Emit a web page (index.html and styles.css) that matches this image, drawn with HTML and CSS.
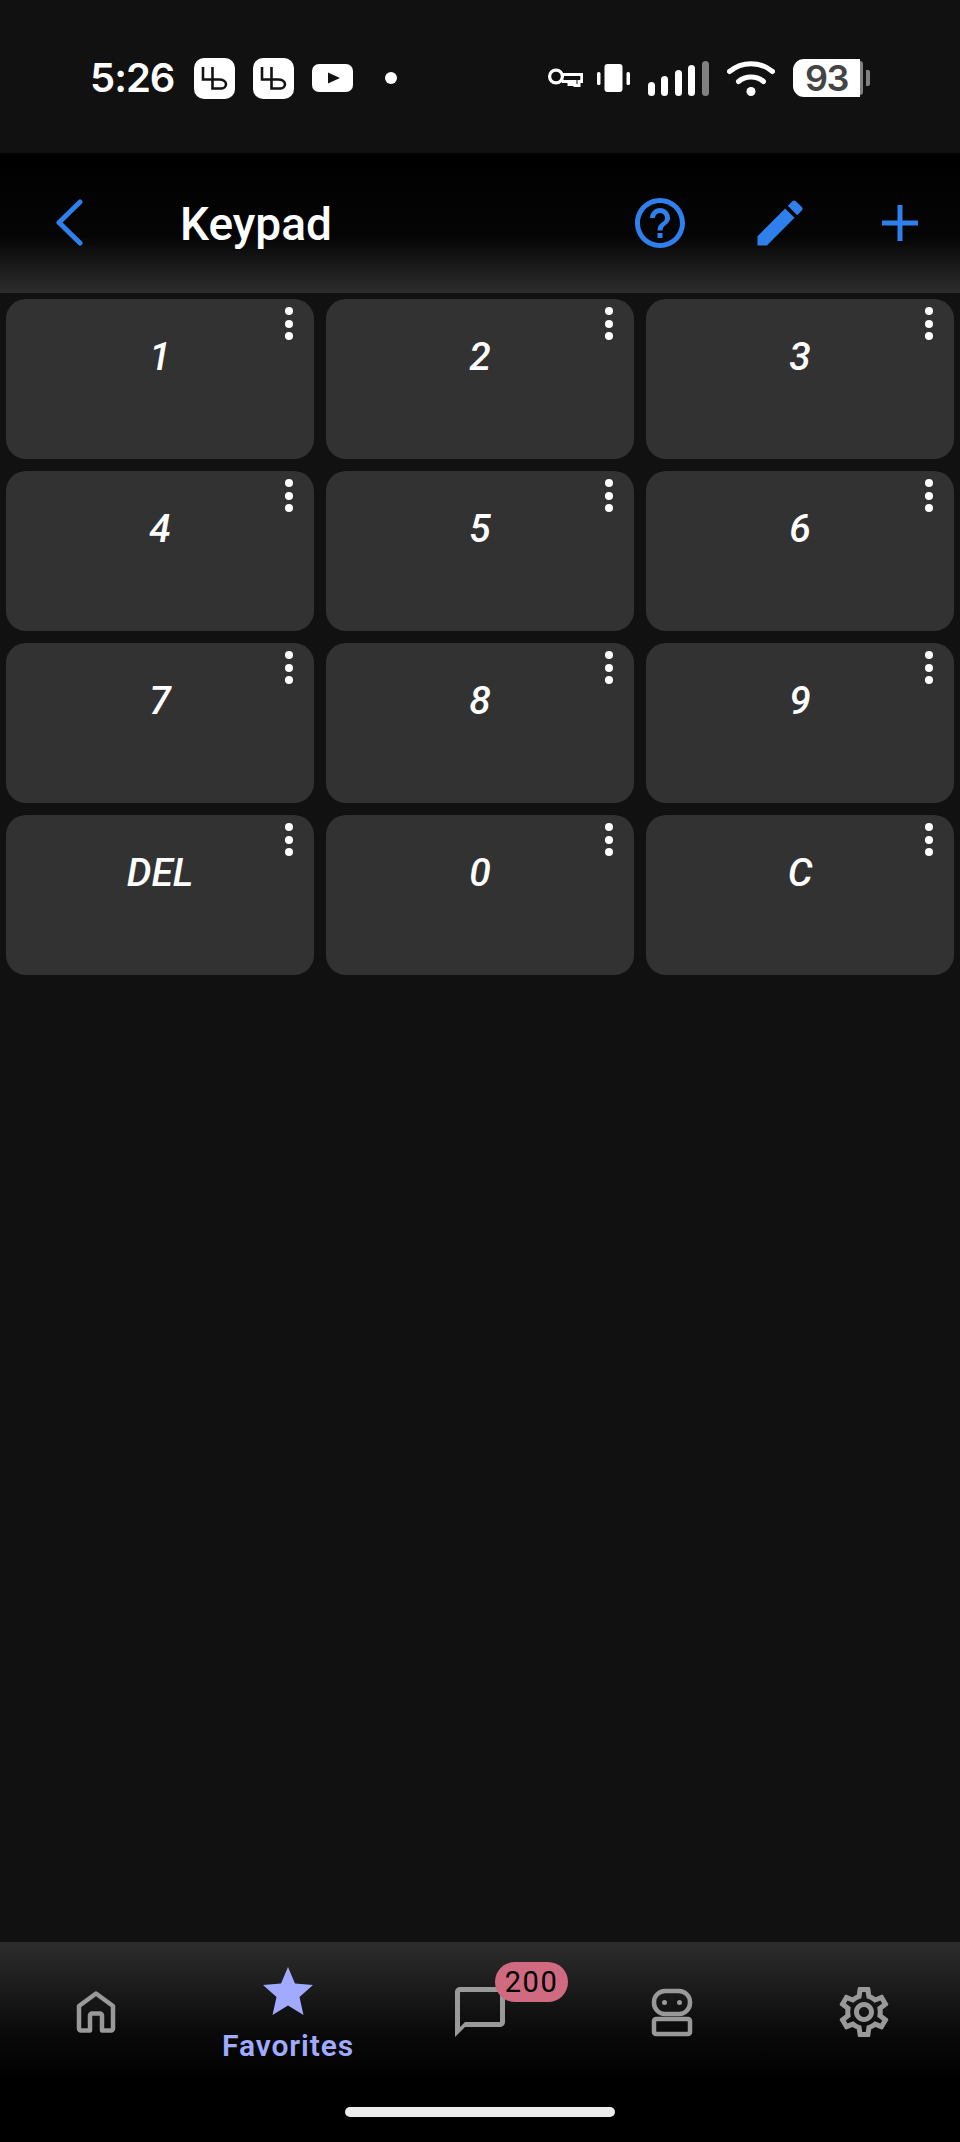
FILE: index.html
```html
<!DOCTYPE html>
<html lang="en">
<head>
<meta charset="utf-8">
<title>Keypad</title>
<link rel="stylesheet" href="styles.css">
</head>
<body>
<div class="app">
  <div class="status">
    <span class="time">5:26</span>
    <svg class="logo" viewBox="0 0 41 41"><rect width="41" height="41" rx="10" fill="#fff"/><path d="M9 9V21.500H25a6.800 4.500 0 0 1 7 4.500 4.500 4.500 0 0 1-4.500 4.500H18.500V9" fill="none" stroke="#121212" stroke-width="2.600"/></svg>
    <svg class="logo" viewBox="0 0 41 41"><rect width="41" height="41" rx="10" fill="#fff"/><path d="M9 9V21.500H25a6.800 4.500 0 0 1 7 4.500 4.500 4.500 0 0 1-4.500 4.500H18.500V9" fill="none" stroke="#121212" stroke-width="2.600"/></svg>
    <svg class="yt" viewBox="0 0 41 28"><rect width="41" height="28" rx="7" fill="#fff"/><path d="M16 8.500 28 14 16 19.500Z" fill="#121212"/></svg>
    <span class="dot"></span>
    <span class="spacer"></span>
    <svg class="key" viewBox="0 0 35 20"><circle cx="8" cy="8.500" r="6.400" fill="none" stroke="#fff" stroke-width="3.200"/><path d="M13.500 6.500H33.800V13.500H31V17.500H27V13.500H24V16.500H21V13.500H14" fill="none" stroke="#fff" stroke-width="3"/></svg>
    <svg class="vib" viewBox="0 0 33 28"><rect x="7.500" width="18" height="28" rx="3" fill="#fff"/><rect y="8" width="3.500" height="13" rx="1.500" fill="#fff"/><rect x="29.500" y="8" width="3.500" height="13" rx="1.500" fill="#fff"/></svg>
    <svg class="sig" viewBox="0 0 61 35"><rect y="21" width="7" height="14" rx="3.500" fill="#fff"/><rect x="13" y="15" width="7" height="20" rx="3.500" fill="#fff"/><rect x="27" y="9" width="7" height="26" rx="3.500" fill="#fff"/><rect x="40" y="4" width="7" height="31" rx="3.500" fill="#fff"/><rect x="54" width="7" height="35" rx="3.500" fill="#808080"/></svg>
    <svg class="wifi" viewBox="0 0 48 35"><path d="M2.500 10.500C15 0 33 0 45.500 10.500" fill="none" stroke="#fff" stroke-width="5" stroke-linecap="round"/><path d="M11.500 20.500C18.500 14.500 29.500 14.500 36.500 20.500" fill="none" stroke="#fff" stroke-width="5" stroke-linecap="round"/><circle cx="24" cy="30.500" r="4.500" fill="#fff"/></svg>
    <div class="battery"><span class="level">93</span><span class="rest"></span><span class="nub"></span></div>
  </div>

  <header class="bar">
    <svg class="back" viewBox="0 0 27 47"><path d="M24 3 3 23.500 24 44" fill="none" stroke="#2f80ed" stroke-width="5" stroke-linecap="round" stroke-linejoin="round"/></svg>
    <h1 class="title">Keypad</h1>
    <svg class="tool help" viewBox="0 0 24 24"><path fill="#2f80ed" d="M11 18h2v-2h-2v2zm1-16C6.480 2 2 6.480 2 12s4.480 10 10 10 10-4.480 10-10S17.520 2 12 2zm0 18c-4.410 0-8-3.590-8-8s3.590-8 8-8 8 3.590 8 8-3.590 8-8 8zm0-14c-2.210 0-4 1.790-4 4h2c0-1.100.9-2 2-2s2 .9 2 2c0 2-3 1.750-3 5h2c0-2.250 3-2.500 3-5 0-2.210-1.790-4-4-4z"/></svg>
    <svg class="tool pen" viewBox="0 0 24 24"><path fill="#2f80ed" d="M3 17.250V21h3.750L17.810 9.940l-3.750-3.750L3 17.250zM20.710 7.040c.39-.39.39-1.020 0-1.410l-2.340-2.340c-.39-.39-1.020-.39-1.410 0l-1.830 1.830 3.750 3.750 1.830-1.830z"/></svg>
    <svg class="tool plus" viewBox="0 0 36 36"><path d="M18 0V36M0 18H36" fill="none" stroke="#2f80ed" stroke-width="5"/></svg>
  </header>

  <main class="grid">
    <div class="key-card"><span class="label">1</span><span class="kebab"><i></i><i></i><i></i></span></div>
    <div class="key-card"><span class="label">2</span><span class="kebab"><i></i><i></i><i></i></span></div>
    <div class="key-card"><span class="label">3</span><span class="kebab"><i></i><i></i><i></i></span></div>
    <div class="key-card"><span class="label">4</span><span class="kebab"><i></i><i></i><i></i></span></div>
    <div class="key-card"><span class="label">5</span><span class="kebab"><i></i><i></i><i></i></span></div>
    <div class="key-card"><span class="label">6</span><span class="kebab"><i></i><i></i><i></i></span></div>
    <div class="key-card"><span class="label">7</span><span class="kebab"><i></i><i></i><i></i></span></div>
    <div class="key-card"><span class="label">8</span><span class="kebab"><i></i><i></i><i></i></span></div>
    <div class="key-card"><span class="label">9</span><span class="kebab"><i></i><i></i><i></i></span></div>
    <div class="key-card"><span class="label">DEL</span><span class="kebab"><i></i><i></i><i></i></span></div>
    <div class="key-card"><span class="label">0</span><span class="kebab"><i></i><i></i><i></i></span></div>
    <div class="key-card"><span class="label">C</span><span class="kebab"><i></i><i></i><i></i></span></div>
  </main>

  <nav class="nav">
    <div class="tabs">
      <div class="tab">
        <svg class="navicon" viewBox="0 0 60 60"><path d="M30 11.500 13 24V46.500a2 2 0 0 0 2 2H24V33.500a2 2 0 0 1 2-2H34a2 2 0 0 1 2 2V48.500H45a2 2 0 0 0 2-2V24Z" fill="none" stroke="#999" stroke-width="4.500" stroke-linejoin="round"/></svg>
      </div>
      <div class="tab active">
        <svg class="star" viewBox="0 0 50 48"><path fill="#a0abff" d="M25 0 32 16.500 50 18 36.500 30 40.500 48 25 38.500 9.500 48 13.500 30 0 18 18 16.500Z"/></svg>
        <span class="tab-label">Favorites</span>
      </div>
      <div class="tab">
        <span class="chat">
          <svg class="navicon" viewBox="0 0 24 24"><path fill="#999" d="M20 2H4c-1.100 0-2 .9-2 2v18l4-4h14c1.100 0 2-.9 2-2V4c0-1.100-.9-2-2-2zm0 14H6l-2 2V4h16v12z"/></svg>
          <span class="badge">200</span>
        </span>
      </div>
      <div class="tab">
        <svg class="navicon" viewBox="0 0 60 60"><rect x="12" y="9" width="36" height="23" rx="11" fill="none" stroke="#999" stroke-width="4.500"/><circle cx="22.500" cy="20.500" r="2.500" fill="#999"/><circle cx="37.500" cy="20.500" r="2.500" fill="#999"/><rect x="12" y="37" width="36" height="15" rx="2" fill="none" stroke="#999" stroke-width="4.500"/></svg>
      </div>
      <div class="tab">
        <svg class="navicon" viewBox="0 0 24 24"><path fill="#999" d="M19.430 12.980c.04-.32.07-.64.07-.98 0-.34-.03-.66-.07-.98l2.110-1.650c.19-.15.24-.42.12-.64l-2-3.460c-.09-.16-.26-.25-.44-.25-.06 0-.12.01-.17.03l-2.490 1c-.52-.4-1.080-.73-1.690-.98l-.38-2.650C14.460 2.180 14.250 2 14 2h-4c-.25 0-.46.18-.49.42l-.38 2.650c-.61.25-1.170.59-1.690.98l-2.490-1c-.06-.02-.12-.03-.18-.03-.17 0-.34.09-.43.25l-2 3.460c-.13.22-.07.49.12.64l2.110 1.650c-.04.32-.07.65-.07.98 0 .33.03.66.07.98l-2.110 1.650c-.19.15-.24.42-.12.64l2 3.460c.09.16.26.25.44.25.06 0 .12-.01.17-.03l2.490-1c.52.4 1.080.73 1.690.98l.38 2.650c.03.24.24.42.49.42h4c.25 0 .46-.18.49-.42l.38-2.650c.61-.25 1.170-.59 1.690-.98l2.490 1c.06.02.12.03.18.03.17 0 .34-.09.43-.25l2-3.460c.12-.22.07-.49-.12-.64l-2.110-1.650zm-1.980-1.710c.04.31.05.52.05.73 0 .21-.02.43-.05.73l-.14 1.130.89.7 1.080.84-.7 1.210-1.270-.51-1.040-.42-.9.68c-.43.32-.84.56-1.250.73l-1.060.43-.16 1.130-.2 1.350h-1.400l-.19-1.350-.16-1.130-1.060-.43c-.43-.18-.83-.41-1.230-.71l-.91-.7-1.060.43-1.270.51-.7-1.210 1.080-.84.89-.7-.14-1.130c-.03-.31-.05-.54-.05-.74s.02-.43.05-.73l.14-1.130-.89-.7-1.080-.84.7-1.210 1.270.51 1.040.42.9-.68c.43-.32.84-.56 1.250-.73l1.060-.43.16-1.130.2-1.350h1.390l.19 1.350.16 1.130 1.060.43c.43.18.83.41 1.230.71l.91.7 1.060-.43 1.270-.51.7 1.210-1.070.85-.89.7.14 1.130zM12 8c-2.210 0-4 1.790-4 4s1.790 4 4 4 4-1.790 4-4-1.790-4-4-4zm0 6c-1.100 0-2-.9-2-2s.9-2 2-2 2 .9 2 2-.9 2-2 2z"/></svg>
      </div>
    </div>
    <div class="home-indicator"></div>
  </nav>
</div>
</body>
</html>
```
FILE: styles.css
```css
* { box-sizing: border-box; }
html, body { margin: 0; padding: 0; background: #111; }
body { font-family: Roboto, "Noto Sans", sans-serif; color: #fff; }
.app { width: 960px; height: 2142px; display: flex; flex-direction: column; overflow: hidden; }

/* status bar */
.status { height: 153px; flex: none; display: flex; align-items: center; padding: 3px 90px 0 90px; background: #111; }
.time { font-family: Inter, Roboto, sans-serif; font-weight: 600; font-size: 40px; line-height: 44px; width: 84px; margin-right: 20px; white-space: nowrap; letter-spacing: -1px; }
.logo { width: 41px; height: 41px; margin-right: 18px; flex: none; }
.yt { width: 41px; height: 28px; margin-right: 32px; flex: none; }
.dot { width: 12px; height: 12px; border-radius: 50%; background: #fff; flex: none; }
.spacer { flex: 1; }
.key { width: 35px; height: 20px; margin-right: 14px; flex: none; }
.vib { width: 33px; height: 28px; margin-right: 18px; flex: none; }
.sig { width: 61px; height: 35px; margin-right: 18px; flex: none; }
.wifi { width: 48px; height: 35px; margin-right: 18px; flex: none; }
.battery { width: 77px; height: 38px; display: flex; align-items: center; flex: none; }
.level { width: 67px; height: 38px; background: #fff; border-radius: 11px 0 0 11px; color: #444; font-family: Inter, Roboto, sans-serif; font-weight: 600; font-size: 36px; line-height: 38px; text-align: center; letter-spacing: -1.500px; }
.rest { width: 3px; height: 34px; background: #808080; border-radius: 0 5px 5px 0; }
.nub { width: 4px; height: 16px; margin-left: 3px; background: #808080; border-radius: 0 2px 2px 0; }

/* header */
.bar { height: 140px; flex: none; display: flex; align-items: center; background: linear-gradient(to bottom, #000 0, #050505 60%, #2d2d2d 100%); padding-bottom: 1px; }
.back { width: 27px; height: 47px; margin-left: 56px; flex: none; }
.title { margin: 3px 0 0 97px; font-size: 46px; font-weight: 500; line-height: 60px; flex: 1; white-space: nowrap; }
.tool { flex: none; }
.help { width: 60px; height: 60px; margin-right: 60px; }
.pen { width: 60px; height: 60px; margin-right: 72px; }
.plus { width: 36px; height: 36px; margin-right: 42px; }

/* grid */
.grid { flex: 1; display: grid; grid-template-columns: repeat(3, 308px); grid-auto-rows: 160px; gap: 12px; padding: 6px; align-content: start; }
.key-card { position: relative; background: #323232; border-radius: 20px; text-align: center; padding-top: 34px; }
.label { font-size: 39px; font-style: italic; font-weight: 500; line-height: 48px; display: block; }
.kebab { position: absolute; top: 8px; right: 21px; display: flex; flex-direction: column; gap: 4.500px; }
.kebab i { width: 8px; height: 8px; border-radius: 50%; background: #fff; display: block; }

/* bottom nav */
.nav { height: 200px; flex: none; display: flex; flex-direction: column; background: linear-gradient(to bottom, #2d2d2d 0, #0a0a0a 45%, #000 70%); }
.tabs { height: 165px; flex: none; display: grid; grid-template-columns: repeat(5, 192px); }
.tab { display: flex; flex-direction: column; align-items: center; padding-top: 40px; }
.tab.active { padding-top: 25px; }
.navicon { width: 60px; height: 60px; display: block; }
.star { width: 50px; height: 48px; display: block; }
.tab-label { font-size: 30px; font-weight: 600; line-height: 36px; margin-top: 13px; color: #a0abff; letter-spacing: .9px; white-space: nowrap; }
.chat { position: relative; display: block; width: 60px; height: 60px; }
.badge { position: absolute; left: 45px; top: -20px; width: 73px; height: 40px; border-radius: 20px; background: #cf6a80; color: #000; font-size: 29px; line-height: 40px; text-align: center; letter-spacing: 1.500px; }
.home-indicator { width: 270px; height: 10px; border-radius: 5px; background: #ececec; align-self: center; }
```
